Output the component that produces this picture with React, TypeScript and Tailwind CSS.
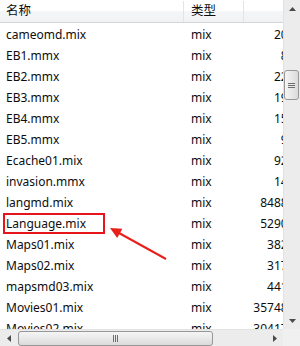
import React from "react";

const rows: [string, string, string][] = [
  ["cameomd.mix", "mix", "20"],
  ["EB1.mmx", "mix", "8"],
  ["EB2.mmx", "mix", "22"],
  ["EB3.mmx", "mix", "19"],
  ["EB4.mmx", "mix", "15"],
  ["EB5.mmx", "mix", "9"],
  ["Ecache01.mix", "mix", "92"],
  ["invasion.mmx", "mix", "14"],
  ["langmd.mix", "mix", "8488"],
  ["Language.mix", "mix", "5290"],
  ["Maps01.mix", "mix", "382"],
  ["Maps02.mix", "mix", "317"],
  ["mapsmd03.mix", "mix", "441"],
  ["Movies01.mix", "mix", "35748"],
  ["Movies02.mix", "mix", "30417"],
];

function Tri({ dir }: { dir: "up" | "down" | "left" | "right" }) {
  const pts = {
    up: "0,4 7,4 3.5,0",
    down: "0,0 7,0 3.5,4",
    left: "4,0 4,7 0,3.5",
    right: "0,0 0,7 4,3.5",
  }[dir];
  const vert = dir === "up" || dir === "down";
  return (
    <svg width={vert ? 7 : 4} height={vert ? 4 : 7} viewBox={vert ? "0 0 7 4" : "0 0 4 7"}>
      <polygon points={pts} fill="#4a4a4a" />
    </svg>
  );
}

export default function App() {
  return (
    <div
      className="relative w-[300px] h-[346px] overflow-hidden bg-white grid grid-cols-[283px_17px] grid-rows-[329px_17px] text-[12px] text-[#0d0d0d]"
      style={{ fontFamily: '"Noto Sans", "Noto Sans CJK SC", sans-serif' }}
    >
      {/* list area */}
      <div className="overflow-hidden flex flex-col">
        <div className="h-[23px] shrink-0 flex border-b border-[#d5d5d5] bg-[linear-gradient(to_bottom,#ffffff_0%,#ffffff_50%,#f5f6f8_52%,#f1f2f4_100%)] w-[306px] text-[12.5px] pt-[1px]">
          <div className="w-[184px] shrink-0 pl-[6px] flex items-center border-r border-[#e3e4e6]">名称</div>
          <div className="w-[60px] shrink-0 pl-[7px] flex items-center border-r border-[#e3e4e6]">类型</div>
          <div className="flex-1" />
        </div>
        <div className="flex flex-col">
          {rows.map(([name, type, size], i) => (
            <div key={name} className="relative h-[21px] shrink-0 pt-[3px] grid grid-cols-[184px_60px_62px] items-center whitespace-nowrap">
              <div className="pl-[6px]">{name}</div>
              <div className="pl-[7px]">{type}</div>
              <div className="text-right">{size} KB</div>
              {i === 9 && (
                <div className="absolute left-[3px] top-[1px] w-[102px] h-[21px] border-2 border-[#e8141c]" />
              )}
            </div>
          ))}
        </div>
      </div>

      {/* vertical scrollbar */}
      <div className="flex flex-col bg-[#ececec] border-l border-[#e2e2e2]">
        <div className="h-[17px] shrink-0 flex items-center justify-center">
          <Tri dir="up" />
        </div>
        <div className="flex-1 flex flex-col pt-[53px]">
          <div className="w-[15px] h-[30px] rounded-[3px] border border-[#979797] bg-[linear-gradient(to_right,#f5f5f5,#e6e6e6_60%,#dadada)] flex flex-col items-center justify-center gap-[1px]">
            <div className="w-[7px] h-[1px] bg-[#6e6e6e]" />
            <div className="w-[7px] h-[1px] bg-[#6e6e6e]" />
            <div className="w-[7px] h-[1px] bg-[#6e6e6e]" />
          </div>
        </div>
        <div className="h-[17px] shrink-0 flex items-center justify-center">
          <Tri dir="down" />
        </div>
      </div>

      {/* horizontal scrollbar */}
      <div className="flex bg-[#ececec] border-t border-[#e2e2e2]">
        <div className="w-[17px] shrink-0 flex items-center justify-center">
          <Tri dir="left" />
        </div>
        <div className="flex-1 flex items-center">
          <div className="ml-[1px] w-[195px] h-[15px] rounded-[3px] border border-[#979797] bg-[linear-gradient(to_bottom,#f5f5f5,#e6e6e6_60%,#dadada)] flex items-center justify-center gap-[1px]">
            <div className="w-[1px] h-[7px] bg-[#6e6e6e]" />
            <div className="w-[1px] h-[7px] bg-[#6e6e6e]" />
            <div className="w-[1px] h-[7px] bg-[#6e6e6e]" />
          </div>
        </div>
        <div className="w-[17px] shrink-0 flex items-center justify-center">
          <Tri dir="right" />
        </div>
      </div>

      {/* corner */}
      <div className="bg-[#f0f0f0]" />

      {/* annotation arrow */}
      <svg className="absolute left-0 top-0 pointer-events-none" width={300} height={346}>
        <line x1={166} y1={259} x2={119} y2={233} stroke="#e8201c" strokeWidth={2} />
        <polygon points="110,228 122.4,228.7 117.2,238" fill="#e8201c" />
      </svg>
    </div>
  );
}
